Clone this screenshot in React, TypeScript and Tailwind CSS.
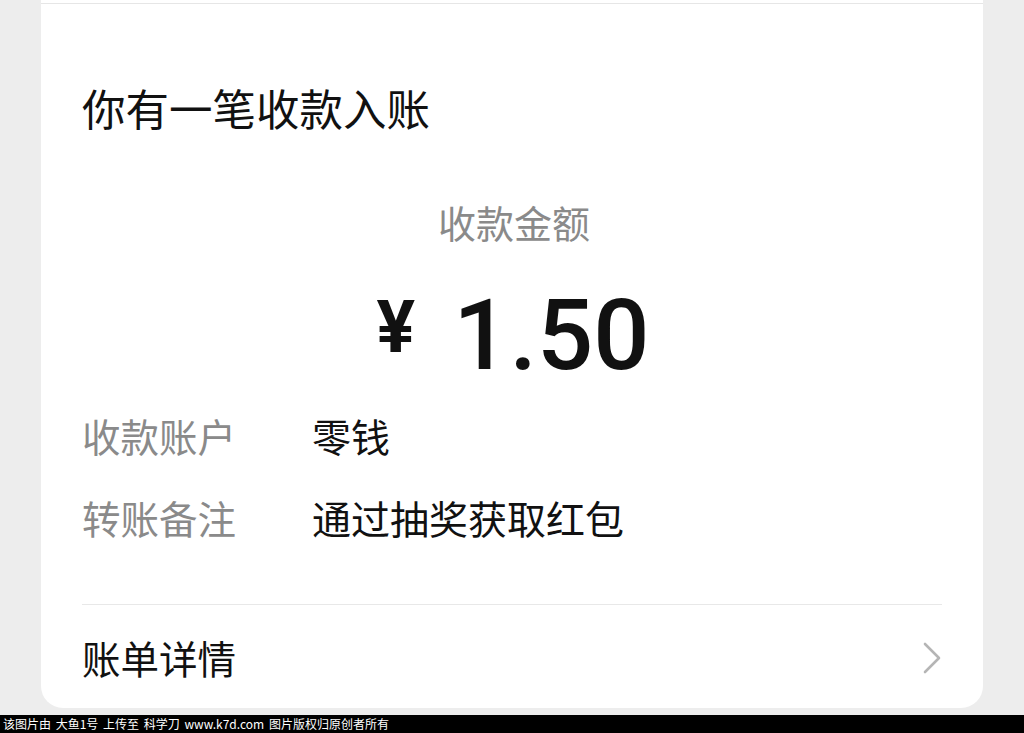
import React from "react";

const cjk = { fontFamily: '"Noto Sans CJK SC", "Noto Sans", sans-serif' };

export default function App() {
  return (
    <div className="w-[1024px] h-[733px] bg-[#ededed] flex flex-col overflow-hidden" style={cjk}>
      <div className="mx-[41px] w-[942px] h-[708px] bg-white rounded-b-[22px] flex flex-col">
        <div className="mt-[3px] h-px bg-[#e6e6e6]" />
        <div className="px-[41px] flex flex-col">
          <div className="mt-[82px] text-[43.5px] leading-[43px] text-[#111111]">你有一笔收款入账</div>
          <div className="mt-[74px] text-[38px] leading-[38px] text-[#8a8a8a] text-center pl-[4px]">收款金额</div>
          <div className="mt-[42px] h-[104px] flex items-center justify-center pl-[2px]">
            <span
              className="text-[72px] leading-[70px] font-bold text-[#111111] mt-[-14px]"
              style={{ fontFamily: 'Roboto, "Liberation Sans", sans-serif' }}
            >
              ¥
            </span>
            <span
              className="ml-[38px] text-[99px] leading-[104px] font-medium text-[#111111]"
              style={{ fontFamily: 'Roboto, "Liberation Sans", sans-serif' }}
            >
              1.50
            </span>
          </div>
          <div className="mt-[29px] flex text-[38.5px] leading-[38px]">
            <div className="w-[230px] text-[#8a8a8a]">收款账户</div>
            <div className="text-[#111111] text-[39px]">零钱</div>
          </div>
          <div className="mt-[44px] flex text-[38.5px] leading-[38px]">
            <div className="w-[230px] text-[#8a8a8a]">转账备注</div>
            <div className="text-[#111111] text-[39px]">通过抽奖获取红包</div>
          </div>
          <div className="mt-[68px] h-px bg-[#e8e8e8]" />
          <div className="mt-[33px] flex items-center justify-between">
            <div className="text-[38.5px] leading-[38px] text-[#111111]">账单详情</div>
            <svg width="19" height="32" viewBox="0 0 19 32" className="mt-[2px]">
              <path d="M2 2 L16 16 L2 30" fill="none" stroke="#b5b5b5" strokeWidth="2.6" strokeLinecap="round" strokeLinejoin="round" />
            </svg>
          </div>
        </div>
      </div>
      <div className="mt-[7px] h-[18px] bg-black flex items-center pl-[3px]">
        <span className="text-[12px] leading-[18px] text-white whitespace-pre [word-spacing:2px]">该图片由 大鱼1号 上传至 科学刀 www.k7d.com 图片版权归原创者所有</span>
      </div>
    </div>
  );
}
